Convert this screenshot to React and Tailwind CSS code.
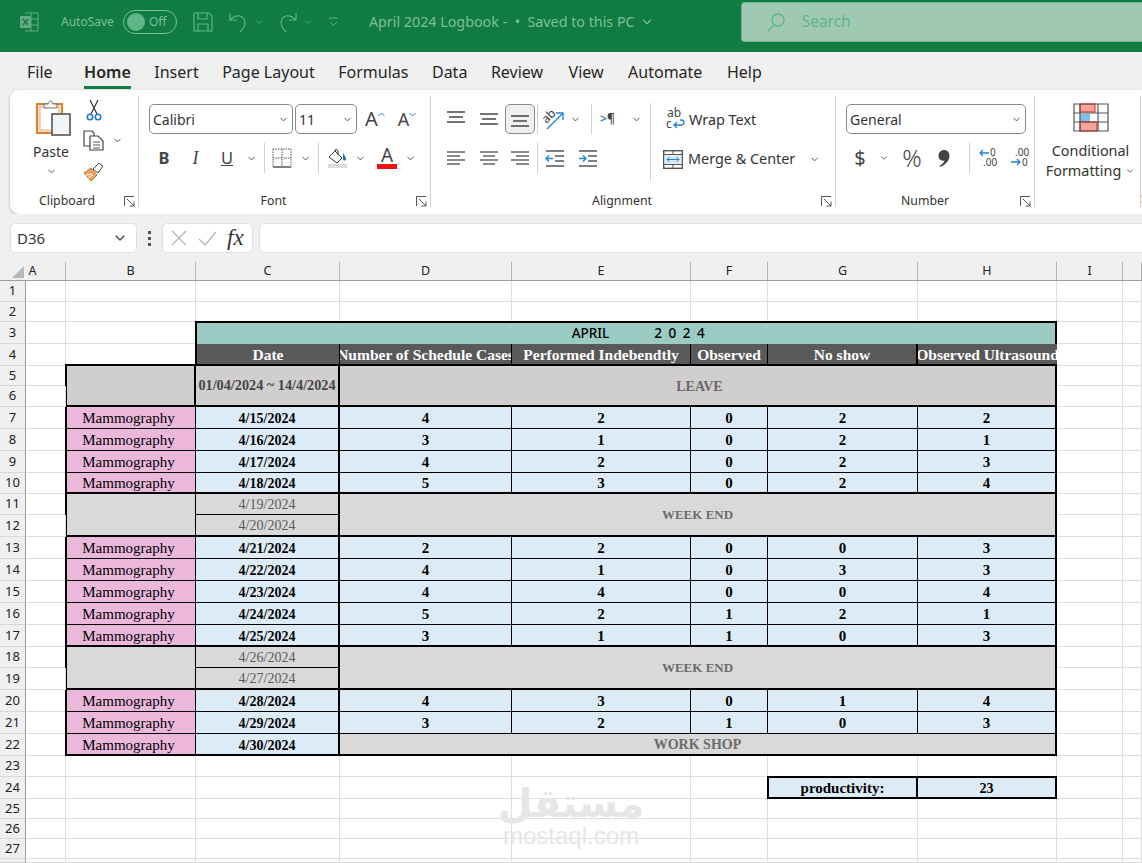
import { ChevronDown } from "lucide-react";

const Chev = ({ className = "text-[#444]", size = 11 }) => (
  <ChevronDown size={size} strokeWidth={2} className={`shrink-0 ${className}`} />
);

function Launcher() {
  return (
    <svg width="11" height="11" viewBox="0 0 11 11" fill="none" stroke="#555" strokeWidth="1">
      <path d="M.5 10V.5H10M3 3l7 7M10 5.500V10H5.500" />
    </svg>
  );
}

function Lines({ rows, color = "#444" }) {
  return (
    <svg width="20" height="18" viewBox="0 0 20 18" stroke={color} strokeWidth="1.3">
      {rows.map(([a, b, y], i) => (
        <path key={i} d={`M${a} ${y}H${b}`} />
      ))}
    </svg>
  );
}

function PasteIcon() {
  return (
    <svg width="38" height="38" viewBox="0 0 38 38" fill="none">
      <rect x="2" y="5" width="25" height="29" fill="#fbe3cc" stroke="#d9822b" strokeWidth="2" />
      <rect x="5" y="8" width="19" height="23" fill="#fff" stroke="#eeb27a" />
      <path d="M9 9V5h4c0-4 5-4 5 0h4v4z" fill="#f1f1f1" stroke="#777" />
      <rect x="17" y="15" width="18" height="21" fill="#f1f5f7" stroke="#555" strokeWidth="1.6" />
    </svg>
  );
}

function Scissors() {
  return (
    <svg width="18" height="22" viewBox="0 0 18 22" fill="none">
      <path d="M5 1l7 14M13 1L6 15" stroke="#333" strokeWidth="1.2" />
      <circle cx="5" cy="18" r="2.700" stroke="#1f7ad1" strokeWidth="1.6" />
      <circle cx="13" cy="18" r="2.700" stroke="#1f7ad1" strokeWidth="1.6" />
    </svg>
  );
}

function CopyIcon() {
  return (
    <svg width="21" height="21" viewBox="0 0 21 21" fill="#fff" stroke="#444" strokeWidth="1.2">
      <path d="M1 1h8l2 2v13H1z" />
      <path d="M7 6h8l5 5v9H7z" />
      <path d="M10 12h7M10 15h7M10 18h7" strokeWidth=".9" />
    </svg>
  );
}

function BrushIcon() {
  return (
    <svg width="21" height="20" viewBox="0 0 21 20" fill="none">
      <path d="M1 11l7-5 6 7-6 6z" fill="#e9a35f" stroke="#c9702a" />
      <path d="M3 13l6-1M5 16l5-3" stroke="#fff" />
      <path d="M10 7l6-6 4 3-5 7z" fill="#fff" stroke="#444" />
    </svg>
  );
}

function BordersIcon() {
  return (
    <svg width="20" height="20" viewBox="0 0 20 20" fill="none" stroke="#555">
      <path d="M1 1h18M1 1v18M19 1v18M1 10h18M10 1v18" strokeDasharray="1.500 1" />
      <path d="M1 19h18" strokeWidth="1.6" />
    </svg>
  );
}

function FillIcon() {
  return (
    <svg width="21" height="21" viewBox="0 0 21 21" fill="none">
      <path d="M2 9l6-6 7 7-5 5z" fill="#fff" stroke="#333" />
      <path d="M8 3l1-2 2 2v4" stroke="#333" />
      <path d="M16 5c2 3 3 5 3 6 0 2-3 2-3 0z" fill="#1c6fc1" />
      <rect x="1" y="16" width="19" height="4" fill="#dcdcdc" />
    </svg>
  );
}

function OrientIcon() {
  return (
    <svg className="overflow-visible" width="22" height="22" viewBox="0 0 22 22" fill="none">
      <text x="0" y="13" transform="rotate(-45 6 9)" fontSize="12" fill="#333" fontFamily="Noto Sans, sans-serif">ab</text>
      <path d="M5 21L20 6M14 5h7v7" stroke="#1f84d8" strokeWidth="1.4" />
    </svg>
  );
}

function IndentIcon({ reverse }) {
  return (
    <svg width="19" height="17" viewBox="0 0 19 17" fill="none">
      <path d="M1 1h18M10 6h9M10 11h9M1 16h18" stroke="#555" strokeWidth="1.3" />
      <path
        d={reverse ? "M8 8.500H1M4 5.500l-3 3 3 3" : "M1 8.500h7M5 5.500l3 3-3 3"}
        stroke="#1f84d8"
        strokeWidth="1.4"
      />
    </svg>
  );
}

function WrapIcon() {
  return (
    <svg className="overflow-visible" width="19" height="22" viewBox="0 0 19 22" fill="none">
      <text x="1" y="8" fontSize="12" fill="#444" fontFamily="Noto Sans, sans-serif">ab</text>
      <text x="0" y="19" fontSize="12" fill="#444" fontFamily="Noto Sans, sans-serif">c</text>
      <path d="M8 16h7c4 0 4-5 0-5h-1M11 13l-3 3 3 3" stroke="#1f84d8" strokeWidth="1.3" />
    </svg>
  );
}

function MergeIcon() {
  return (
    <svg width="20" height="19" viewBox="0 0 20 19" fill="none">
      <rect x=".7" y=".7" width="18.600" height="17.600" stroke="#555" strokeWidth="1.4" />
      <path d="M.7 4.500h18.600M.7 14.500h18.600M10 .7v3.800M10 14.500v3.800" stroke="#555" />
      <rect x="1.500" y="5" width="17" height="9" fill="#dcecf9" />
      <path d="M4 9.500h12M6.500 7l-2.500 2.500 2.500 2.500M13.500 7l2.500 2.500-2.500 2.500" stroke="#1f84d8" />
    </svg>
  );
}

function DecimalIcon({ more }) {
  return (
    <svg className="overflow-visible" width="21" height="21" viewBox="0 0 21 21" fill="none">
      <text x={more ? 5 : 12} y="8" fontSize="10" fill="#444" fontFamily="Noto Sans, sans-serif">
        {more ? ".00" : "0"}
      </text>
      <text x={more ? 12 : 5} y="18" fontSize="10" fill="#444" fontFamily="Noto Sans, sans-serif">
        {more ? "0" : ".00"}
      </text>
      <path
        d={more ? "M1 14h9M7 11l3 3-3 3" : "M11 5H2M5 2L2 5l3 3"}
        stroke="#1f84d8"
        strokeWidth="1.3"
      />
    </svg>
  );
}

function CommaIcon() {
  return (
    <svg width="12" height="17" viewBox="0 0 12 17" fill="#444">
      <path d="M6 0c3.500 0 5.500 2.500 5.500 5.500C11.500 11 7 15 2 17l-.5-1c2.500-1.500 4.500-3.500 5-5.500C3 11.500.5 9 .5 5.500.5 2.500 3 0 6 0z" />
    </svg>
  );
}

function CondIcon() {
  return (
    <svg width="36" height="29" viewBox="0 0 36 29" fill="none">
      <rect x="7" y="1" width="15" height="8" fill="#f7a49b" stroke="#e8201a" />
      <rect x="7" y="11" width="10" height="8" fill="#82bdec" />
      <rect x="7" y="19" width="17" height="9" fill="#f7a49b" stroke="#e8201a" />
      <path d="M1 1h34v27H1zM1 10h34M1 19h34M7 1v27M25 1v27" stroke="#555" strokeWidth="1.2" />
    </svg>
  );
}

function ExcelLogo() {
  return (
    <svg width="19" height="20" viewBox="0 0 19 20" fill="none" stroke="#62aa84">
      <path d="M5 1h13v18H5M5 7h13M5 13h13M11 1v18" />
      <rect x=".5" y="4.500" width="10" height="11" fill="#62aa84" />
      <path d="M3 7l5 6M8 7l-5 6" stroke="#107c41" strokeWidth="1.4" />
    </svg>
  );
}

function TitleBar() {
  return (
    <div className="h-[52px] bg-[#107c41] flex items-center pl-[20px] pb-[8px] text-[#7fbd9c] text-[13px]">
      <ExcelLogo />
      <span className="ml-[22px] text-[12px]">AutoSave</span>
      <div className="ml-[9px] w-[54px] h-[24px] rounded-full border border-[#7fbd9c] flex items-center pl-[3px] gap-[4px]">
        <div className="w-[18px] h-[18px] rounded-full bg-[#5fb586]" />
        <span className="text-[12px]">Off</span>
      </div>
      <svg className="ml-[16px]" width="20" height="20" viewBox="0 0 20 20" fill="none" stroke="#5fb586" strokeWidth="1.2">
        <path d="M1 1h15l3 3v15H1zM5 1v6h9V1M5 19v-7h10v7" />
      </svg>
      <svg className="ml-[15px]" width="21" height="21" viewBox="0 0 21 21" fill="none" stroke="#5fb586" strokeWidth="1.2">
        <path d="M2 1v7h7M2 8c3-3 6-5 10-4 6 2 7 9 0 16" />
      </svg>
      <Chev className="ml-[5px] text-[#5fb586]" size={10} />
      <svg className="ml-[13px]" width="21" height="21" viewBox="0 0 21 21" fill="none" stroke="#5fb586" strokeWidth="1.2">
        <path d="M19 1v7h-7M19 8c-3-3-6-5-10-4-6 2-7 9 0 16" />
      </svg>
      <Chev className="ml-[5px] text-[#5fb586]" size={10} />
      <svg className="ml-[15px]" width="11" height="10" viewBox="0 0 11 10" fill="none" stroke="#5fb586">
        <path d="M1 1h9M2 5l3.500 3.500L9 5" />
      </svg>
      <span className="ml-[30px] text-[14.3px] whitespace-pre">{"April 2024 Logbook -  •  Saved to this PC"}</span>
      <Chev className="ml-[5px] text-[#7fbd9c]" size={14} />
      <div className="ml-[87px] flex-1 h-[40px] rounded-l-[4px] bg-[#a0c9b3] border border-[#6fb38f] border-r-0 flex items-center pl-[24px] gap-[16px] text-[#5fb586] text-[15.5px]">
        <svg width="20" height="20" viewBox="0 0 20 20" fill="none" stroke="#5fb586" strokeWidth="1.3">
          <circle cx="12" cy="8" r="6" />
          <path d="M8 13l-6 6" />
        </svg>
        Search
      </div>
    </div>
  );
}

function Tabs() {
  const tabs = [
    ["File", "mr-[8px]"],
    ["Home", ""],
    ["Insert", ""],
    ["Page Layout", ""],
    ["Formulas", ""],
    ["Data", ""],
    ["Review", ""],
    ["View", "ml-[2px]"],
    ["Automate", "ml-[1px]"],
    ["Help", "ml-[1px]"],
  ];
  return (
    <div className="h-[38px] bg-[#f0f0f0] flex pl-[27px] gap-[23.5px] text-[16px] text-[#262626]">
      {tabs.map(([t, extra]) => (
        <div
          key={t}
          className={
            t === "Home"
              ? "h-[37px] flex items-center font-semibold border-b-[3px] border-[#107c41] pt-[6px]"
              : `h-[37px] flex items-center pt-[3px] ${extra}`
          }
        >
          {t}
        </div>
      ))}
    </div>
  );
}

function Select({ label, width }) {
  return (
    <div className={`${width} h-[30px] bg-white rounded-[5px] border border-[#8a8a8a] flex items-center justify-between pl-[3px] pr-[3px] text-[14px] text-[#333]`}>
      {label}
      <Chev />
    </div>
  );
}

function Group({ label, width, children, labelPad = "", launcher = true }) {
  return (
    <div className={`${width} shrink-0 h-[111px] my-[6px] border-r border-[#d2d2d2] flex flex-col`}>
      <div className="h-[99px]">{children}</div>
      <div className="h-[12px] flex items-center text-[12.3px] text-[#333] pr-[3px]">
        <div className={`flex-1 text-center pt-[1px] ${labelPad}`}>{label}</div>
        {launcher && <Launcher />}
      </div>
    </div>
  );
}

const Slot = ({ w, children, className = "" }) => (
  <div className={`${w} h-[30px] shrink-0 flex items-center justify-center ${className}`}>{children}</div>
);
const Sep = () => <div className="w-px h-[30px] bg-[#d2d2d2] shrink-0" />;

function Ribbon() {
  return (
    <div className="ml-[10px] h-[124px] bg-white rounded-l-[9px] shadow-[0_1px_3px_rgba(0,0,0,0.25)] flex overflow-hidden font-['Noto_Sans',sans-serif]">
      <Group label="Clipboard" width="w-[129px]">
        <div className="flex pt-[3px]">
          <div className="w-[70px] pl-[12px] flex flex-col items-center">
            <div className="pl-[6px]"><PasteIcon /></div>
            <span className="text-[14px] leading-[20px] mt-[5px] text-[#333]">Paste</span>
            <Chev className="mt-[4px] text-[#444]" />
          </div>
          <div className="flex flex-col items-start ml-[3px]">
            <div className="h-[22px] pl-[2px] mt-[0px]"><Scissors /></div>
            <div className="flex items-center gap-[8px] mt-[9px]"><CopyIcon /><Chev /></div>
            <div className="mt-[11px]"><BrushIcon /></div>
          </div>
        </div>
      </Group>

      <Group label="Font" width="w-[292px]" labelPad="pr-[8px]">
        <div className="flex items-center mt-[8px] pl-[10px]">
          <Select label="Calibri" width="w-[144px]" />
          <Select label="11" width="w-[62px] ml-[2px]" />
          <div className="flex items-start ml-[8px] text-[20px] leading-[30px] text-[#444]">
            A<svg className="mt-[8px]" width="7" height="5" viewBox="0 0 7 5" fill="none" stroke="#1f84d8"><path d="M.5 4L3.500 1l3 3" /></svg>
          </div>
          <div className="flex items-start ml-[13px] text-[18px] leading-[30px] text-[#444]">
            A<svg className="mt-[8px]" width="7" height="5" viewBox="0 0 7 5" fill="none" stroke="#1f84d8"><path d="M.5 1l3 3 3-3" /></svg>
          </div>
        </div>
        <div className="flex items-center mt-[9px] pl-[10px] text-[#444] text-[16.5px]">
          <Slot w="w-[30px]" className="font-bold">B</Slot>
          <Slot w="w-[33px]" className="italic font-['Liberation_Serif',serif] text-[18px]">I</Slot>
          <Slot w="w-[30px]" className="underline">U</Slot>
          <Slot w="w-[18px]"><Chev /></Slot>
          <div className="w-[4px]" />
          <Sep />
          <Slot w="w-[34px]"><BordersIcon /></Slot>
          <Slot w="w-[12px]"><Chev /></Slot>
          <div className="w-[7px]" />
          <Sep />
          <Slot w="w-[36px]"><FillIcon /></Slot>
          <Slot w="w-[10px]"><Chev /></Slot>
          <Slot w="w-[40px] ml-[2px]">
            <div className="flex flex-col items-center leading-[17px] text-[19px]">
              A
              <div className="w-[20px] h-[5px] bg-[#e81414]" />
            </div>
          </Slot>
          <Slot w="w-[6px]"><Chev /></Slot>
        </div>
      </Group>

      <Group label="Alignment" width="w-[405px]" labelPad="pr-[8px]">
        <div className="flex pl-[9px]">
          <div>
            <div className="flex items-center mt-[8px]">
              <Slot w="w-[32px]"><Lines rows={[[1, 19, 2], [3, 17, 7], [1, 19, 12]]} /></Slot>
              <Slot w="w-[33px]"><Lines rows={[[1, 19, 4], [3, 17, 9], [1, 19, 14]]} /></Slot>
              <Slot w="w-[30px]" className="bg-[#efefef] border border-[#8a8a8a] rounded-[5px]"><Lines rows={[[1, 19, 6], [3, 17, 11], [1, 19, 16]]} /></Slot>
              <div className="w-[1px] ml-[2px] mr-[4px]"><Sep /></div>
              <OrientIcon />
              <Slot w="w-[22px]"><Chev /></Slot>
              <div className="w-[1px] ml-[5px] mr-[8px]"><Sep /></div>
              <div className="w-[24px] text-[12px] font-semibold text-[#444]"><span className="text-[#1f84d8]">&gt;</span>¶</div>
              <Slot w="w-[24px]"><Chev /></Slot>
            </div>
            <div className="flex items-center mt-[9px]">
              <Slot w="w-[32px]"><Lines color="#666" rows={[[1, 19, 3], [1, 14, 7], [1, 19, 11], [1, 14, 15]]} /></Slot>
              <Slot w="w-[33px]"><Lines color="#666" rows={[[1, 19, 3], [4, 16, 7], [1, 19, 11], [4, 16, 15]]} /></Slot>
              <Slot w="w-[30px]"><Lines color="#666" rows={[[1, 19, 3], [6, 19, 7], [1, 19, 11], [6, 19, 15]]} /></Slot>
              <div className="w-[1px] ml-[2px] mr-[3px]"><Sep /></div>
              <Slot w="w-[27px]"><IndentIcon reverse /></Slot>
              <Slot w="w-[38px]"><IndentIcon /></Slot>
            </div>
          </div>
          <div className="w-px h-[78px] bg-[#d2d2d2] mt-[7px] ml-[2px]" />
          <div className="pl-[12px] text-[14.4px] text-[#333]">
            <div className="flex items-center h-[30px] mt-[9px] gap-[4px] pl-[3px]">
              <WrapIcon />Wrap Text
            </div>
            <div className="flex items-center h-[30px] mt-[9px] gap-[5px]">
              <MergeIcon />Merge &amp; Center
              <Chev className="ml-[9px] text-[#444]" />
            </div>
          </div>
        </div>
      </Group>

      <Group label="Number" width="w-[199px]" labelPad="pr-[6px]">
        <div className="pl-[10px] pt-[8px]">
          <Select label="General" width="w-[180px]" />
        </div>
        <div className="flex items-center mt-[9px] pl-[13px] text-[#444]">
          <Slot w="w-[22px]" className="text-[20px]">$</Slot>
          <Slot w="w-[26px]"><Chev size={10} /></Slot>
          <Slot w="w-[30px]" className="text-[24px] font-light">%</Slot>
          <Slot w="w-[34px]"><CommaIcon /></Slot>
          <div className="w-[16px] flex justify-end"><Sep /></div>
          <Slot w="w-[36px]"><DecimalIcon /></Slot>
          <Slot w="w-[28px]"><DecimalIcon more /></Slot>
        </div>
      </Group>

      <Group label="" width="w-[106px]" launcher={false}>
        <div className="flex flex-col items-center pt-[7px] pl-[6px] text-[14.4px] leading-[20px] text-[#333]">
          <CondIcon />
          <span className="mt-[9px]">Conditional</span>
          <span className="flex items-center gap-[4px]">Formatting <Chev size={10} /></span>
        </div>
      </Group>
      <div className="self-end text-[12.3px] text-[#333] pb-[6px]">Styles</div>
    </div>
  );
}

function FormulaBar() {
  return (
    <div className="h-[48px] bg-[#f0f0f0] flex items-center pl-[10px] gap-[6px] font-['Noto_Sans',sans-serif]">
      <div className="w-[127px] h-[30px] rounded-[5px] bg-white border border-[#e0e0e0] flex items-center justify-between pl-[6px] pr-[8px] text-[15px] text-[#333]">
        D36
        <Chev size={16} />
      </div>
      <div className="w-[13px] flex flex-col items-center gap-[3px]">
        <div className="w-[3px] h-[3px] bg-[#555]" />
        <div className="w-[3px] h-[3px] bg-[#555]" />
        <div className="w-[3px] h-[3px] bg-[#555]" />
      </div>
      <div className="w-[91px] h-[30px] rounded-[5px] bg-white border border-[#e0e0e0] flex items-center pl-[8px] gap-[11px]">
        <svg width="16" height="16" viewBox="0 0 16 16" stroke="#b5b5b5" strokeWidth="1.3"><path d="M1 1l14 14M15 1L1 15" /></svg>
        <svg width="19" height="15" viewBox="0 0 19 15" fill="none" stroke="#b5b5b5" strokeWidth="1.3"><path d="M1 8l6 6L18 1" /></svg>
        <span className="font-['Liberation_Serif',serif] italic text-[23px] text-[#333] -ml-[1px]">fx</span>
      </div>
      <div className="flex-1 h-[30px] rounded-l-[5px] bg-white border border-[#e0e0e0] border-r-0" />
    </div>
  );
}

function ColumnHeaders() {
  const cols = [
    ["A", "w-[40px] pr-[26px]"], ["B", "w-[130px]"], ["C", "w-[144px]"], ["D", "w-[172px]"], ["E", "w-[179px]"],
    ["F", "w-[77px]"], ["G", "w-[150px]"], ["H", "w-[139px]"], ["I", "w-[66px]"], ["", "flex-1"],
  ];
  return (
    <div className="h-[19px] flex bg-[#f0f0f0] border-b border-[#9e9e9e] text-[12.5px] text-[#222] font-['Noto_Sans',sans-serif]">
      <div className="w-[26px] flex items-end justify-end pr-[2px] pb-[2px]">
        <div className="w-0 h-0 border-l-[12px] border-l-transparent border-b-[12px] border-b-[#b8b8b8]" />
      </div>
      {cols.map(([c, w]) => (
        <div key={c} className={`${w} shrink-0 border-r border-[#b5b5b5] flex items-center justify-center`}>{c}</div>
      ))}
    </div>
  );
}

const Blank = ({ n = 1 }) =>
  Array.from({ length: n }, (_, i) => <div key={i} className="border-r border-b border-[#dedede]" />);

const RowNum = ({ n }) => (
  <div className="bg-[#f0f0f0] border-r border-b border-r-[#9e9e9e] border-b-[#d8d8d8] flex items-center justify-center text-[13px] text-[#222] font-['Noto_Sans',sans-serif]">
    {n}
  </div>
);

const cell = "flex items-center justify-center overflow-hidden whitespace-nowrap font-['Liberation_Serif',serif] text-black";

function DataRow({ n, date, vals, end }) {
  const bottom = end ? "border-b-2 pt-[2px]" : "border-b pt-[1px]";
  return (
    <>
      <RowNum n={n} />
      <Blank />
      <div className={`${cell} -ml-[1px] bg-[#ebb8dc] text-[15px] pr-[5px] border-l-2 border-r border-black ${bottom}`}>Mammography</div>
      <div className={`${cell} bg-[#ddebf7] text-[14px] font-bold border-r-2 border-black ${bottom}`}>{date}</div>
      {vals.map((v, i) => (
        <div key={i} className={`${cell} bg-[#ddebf7] text-[15px] font-bold border-black ${bottom} ${i === 4 ? "border-r-2" : "border-r"}`}>
          {v}
        </div>
      ))}
      <Blank n={2} />
    </>
  );
}

function WeekEnd({ a, b, d1, d2 }) {
  const note = "flex items-center justify-center overflow-hidden whitespace-nowrap font-['Liberation_Serif',serif] bg-[#d9d9d9] border-black pt-[1px]";
  return (
    <>
      <RowNum n={a} />
      <Blank />
      <div className={`${note} -ml-[1px] row-span-2 border-l-2 border-r border-b-2`} />
      <div className={`${note} text-[14px] text-[#5a5a5a] border-r-2 border-b`}>{d1}</div>
      <div className={`${note} row-span-2 col-span-5 text-[13px] font-bold text-[#6b6b6b] border-r-2 border-b-2`}>WEEK END</div>
      <Blank n={2} />
      <RowNum n={b} />
      <Blank />
      <div className={`${note} text-[14px] text-[#5a5a5a] border-r-2 border-b-2`}>{d2}</div>
      <Blank n={2} />
    </>
  );
}

function Sheet() {
  const headers = ["Date", "Number of Schedule Cases", "Performed Indebendtly", "Observed", "No show", "Observed Ultrasound"];
  return (
    <div className="grid grid-cols-[26px_40px_130px_144px_172px_179px_77px_150px_139px_66px_19px] grid-rows-[21px_20px_22px_22px_20px_21px_22px_22px_22px_21px_21px_22px_22px_22px_22px_22px_22px_21px_22px_22px_22px_22px_21px_22px_20px_20px_20px_4px] bg-white">
      <RowNum n={1} /><Blank n={10} />
      <RowNum n={2} /><Blank n={10} />

      <RowNum n={3} /><Blank n={2} />
      <div className="col-span-6 -ml-[1px] -mt-[1px] bg-[#9bcbc3] border-2 border-b-0 border-black flex items-center justify-center pl-[26px] text-[13.5px] font-medium text-black font-['Noto_Sans',sans-serif]">
        <span>APRIL</span>
        <span className="ml-[45px] tracking-[1.5px]">2 0 2 4</span>
      </div>
      <Blank n={2} />

      <RowNum n={4} /><Blank n={2} />
      {headers.map((h, i) => (
        <div
          key={h}
          className={`${cell} bg-[#595959] !text-white text-[15.5px] pt-[1px] font-bold border-black border-b-2 ${i === 0 ? "border-l-2 -ml-[1px]" : ""} ${i === 4 ? "border-r-2" : i === 5 ? "" : "border-r"}`}
        >
          {h}
        </div>
      ))}
      <Blank n={2} />

      <RowNum n={5} /><Blank />
      <div className="row-span-2 -ml-[1px] -mt-[2px] bg-[#d0cece] border-2 border-black" />
      <div className={`${cell} row-span-2 bg-[#d0cece] !text-[#444] text-[14.25px] font-bold border-b-2 border-r-2 border-black`}>01/04/2024 ~ 14/4/2024</div>
      <div className={`${cell} col-span-5 row-span-2 bg-[#d0cece] !text-[#6b6667] text-[14px] pl-[4px] pt-[1px] font-bold border-b-2 border-r-2 border-black`}>LEAVE</div>
      <Blank n={2} />
      <RowNum n={6} /><Blank /><Blank n={2} />

      <DataRow n={7} date="4/15/2024" vals={[4, 2, 0, 2, 2]} />
      <DataRow n={8} date="4/16/2024" vals={[3, 1, 0, 2, 1]} />
      <DataRow n={9} date="4/17/2024" vals={[4, 2, 0, 2, 3]} />
      <DataRow n={10} date="4/18/2024" vals={[5, 3, 0, 2, 4]} end />
      <WeekEnd a={11} b={12} d1="4/19/2024" d2="4/20/2024" />
      <DataRow n={13} date="4/21/2024" vals={[2, 2, 0, 0, 3]} />
      <DataRow n={14} date="4/22/2024" vals={[4, 1, 0, 3, 3]} />
      <DataRow n={15} date="4/23/2024" vals={[4, 4, 0, 0, 4]} />
      <DataRow n={16} date="4/24/2024" vals={[5, 2, 1, 2, 1]} />
      <DataRow n={17} date="4/25/2024" vals={[3, 1, 1, 0, 3]} end />
      <WeekEnd a={18} b={19} d1="4/26/2024" d2="4/27/2024" />
      <DataRow n={20} date="4/28/2024" vals={[4, 3, 0, 1, 4]} />
      <DataRow n={21} date="4/29/2024" vals={[3, 2, 1, 0, 3]} />

      <RowNum n={22} /><Blank />
      <div className={`${cell} -ml-[1px] bg-[#ebb8dc] text-[15px] pr-[5px] pt-[2px] border-l-2 border-r border-b-2 border-black`}>Mammography</div>
      <div className={`${cell} bg-[#ddebf7] text-[14px] pt-[2px] font-bold border-r-2 border-b-2 border-black`}>4/30/2024</div>
      <div className={`${cell} col-span-5 bg-[#d9d9d9] !text-[#6b6b6b] text-[14px] font-bold border-r-2 border-b-2 border-black`}>WORK SHOP</div>
      <Blank n={2} />

      <RowNum n={23} /><Blank n={10} />

      <RowNum n={24} /><Blank n={6} />
      <div className={`${cell} -ml-[1px] -mt-[1px] bg-[#ddebf7] text-[15px] pt-[1px] font-bold border-2 border-black`}>productivity:</div>
      <div className={`${cell} -mt-[1px] bg-[#ddebf7] text-[14px] pt-[1px] font-bold border-y-2 border-r-2 border-black`}>23</div>
      <Blank n={2} />

      <RowNum n={25} /><Blank n={10} />
      <RowNum n={26} /><Blank n={10} />
      <RowNum n={27} /><Blank n={10} />
      <RowNum n="" /><Blank n={10} />
    </div>
  );
}

export default function App() {
  return (
    <div className="relative w-[1142px] h-[863px] overflow-hidden bg-white font-['Noto_Sans',sans-serif]">
      <TitleBar />
      <Tabs />
      <div className="bg-[#f0f0f0]"><Ribbon /></div>
      <FormulaBar />
      <ColumnHeaders />
      <Sheet />
      {/* watermark sits on top of the grid */}
      <div className="absolute left-[500px] top-[781px] w-[142px] flex flex-col items-center pointer-events-none text-[#e6e6e6]">
        <span className="text-[40px] leading-[44px] font-bold font-['DejaVu_Sans',sans-serif]">مستقل</span>
        <span className="text-[24px] leading-[22px] font-['Liberation_Sans',sans-serif]">mostaql.com</span>
      </div>
    </div>
  );
}
